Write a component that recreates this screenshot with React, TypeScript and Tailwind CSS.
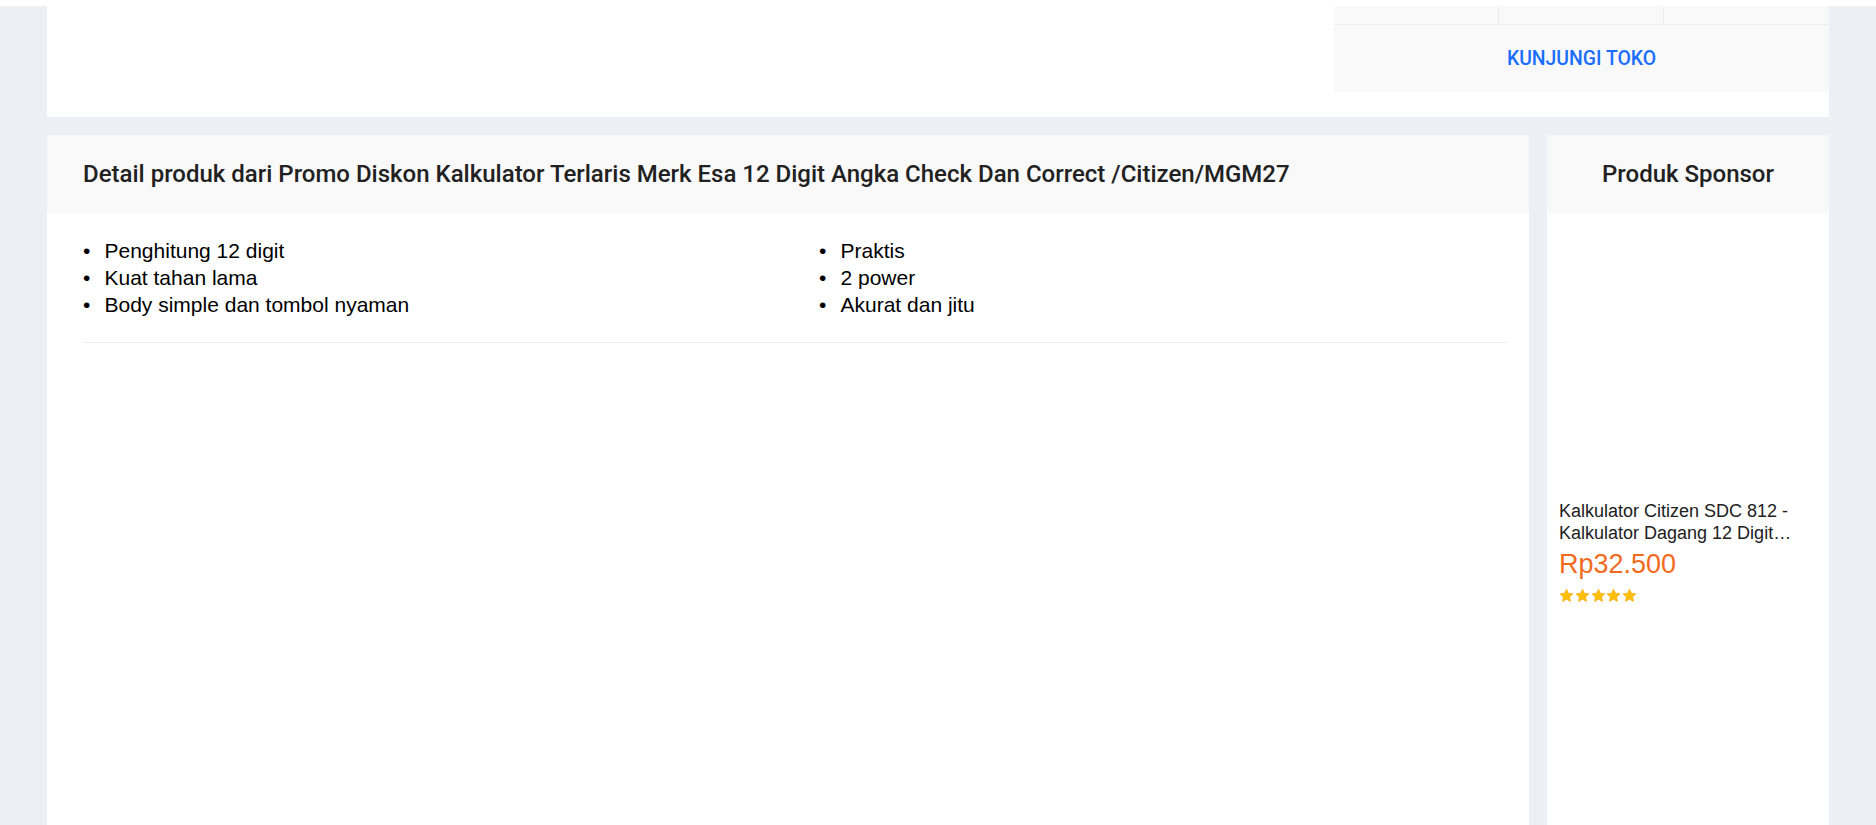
import React from "react";

const roboto = { fontFamily: "Roboto, 'Noto Sans', sans-serif" };

function Star() {
  return (
    <svg width="15" height="15" viewBox="0 0 24 24">
      <path
        d="M12 1.8l3.1 6.6 7.2.9-5.3 5 1.4 7.1L12 17.9l-6.4 3.5 1.4-7.1-5.3-5 7.2-.9z"
        fill="#ffc107"
        stroke="#f5a300"
        strokeWidth="1"
        strokeLinejoin="round"
      />
    </svg>
  );
}

function Bullet({ children }: { children: React.ReactNode }) {
  return (
    <li className="flex">
      <span className="w-[21.5px] shrink-0">•</span>
      <span>{children}</span>
    </li>
  );
}

export default function App() {
  return (
    <div className="min-h-screen bg-[#eeeff4]">
      <div className="h-[6px] bg-white" />
      <div className="mx-[47px]">
        {/* top block */}
        <div className="flex h-[111px] justify-end bg-white">
          <div className="h-[86px] w-[495px] bg-[#f9f9f9]">
            <div className="grid h-[19px] grid-cols-3 border-b border-[#ececf0]">
              <div className="border-r border-[#ececf0]" />
              <div className="border-r border-[#ececf0]" />
              <div />
            </div>
            <div
              className="flex h-[67px] items-center justify-center text-[19.4px] font-medium text-[#1a6dff]"
              style={roboto}
            >
              KUNJUNGI TOKO
            </div>
          </div>
        </div>

        {/* panels */}
        <div className="mt-[18px] flex gap-[18px]">
          <div className="min-h-[700px] w-[1482px] bg-white">
            <div
              className="flex h-[78px] items-center bg-[#f9f9f9] pl-[36px] text-[24px] font-medium text-[#212121]"
              style={roboto}
            >
              Detail produk dari Promo Diskon Kalkulator Terlaris Merk Esa 12 Digit Angka Check Dan Correct /Citizen/MGM27
            </div>
            <div className="ml-[36px] mr-[21px] border-b border-[#eeeff4] pb-[24px] pt-[24px]">
              <div
                className="grid grid-cols-[736px_1fr] text-[21px] leading-[27px] text-black"
                style={{ fontFamily: "'Liberation Sans', Arial, sans-serif" }}
              >
                <ul>
                  <Bullet>Penghitung 12 digit</Bullet>
                  <Bullet>Kuat tahan lama</Bullet>
                  <Bullet>Body simple dan tombol nyaman</Bullet>
                </ul>
                <ul>
                  <Bullet>Praktis</Bullet>
                  <Bullet>2 power</Bullet>
                  <Bullet>Akurat dan jitu</Bullet>
                </ul>
              </div>
            </div>
          </div>

          <div className="min-h-[700px] w-[282px] bg-white">
            <div
              className="flex h-[78px] items-center justify-center bg-[#f9f9f9] text-[24px] font-medium text-[#212121]"
              style={roboto}
            >
              Produk Sponsor
            </div>
            <div className="h-[288px]" />
            <div
              className="px-[12px]"
              style={{ fontFamily: "'Liberation Sans', Arial, sans-serif" }}
            >
              <div className="line-clamp-2 text-[18px] leading-[21.6px] text-[#212121]">
                Kalkulator Citizen SDC 812 - Kalkulator Dagang 12 Digit Original Garansi Resmi
              </div>
              <div className="mt-[5px] text-[27px] leading-[30px] text-[#f26b1d]">
                Rp32.500
              </div>
              <div className="mt-[9px] flex gap-[0.75px]">
                <Star />
                <Star />
                <Star />
                <Star />
                <Star />
              </div>
            </div>
          </div>
        </div>
      </div>
    </div>
  );
}
